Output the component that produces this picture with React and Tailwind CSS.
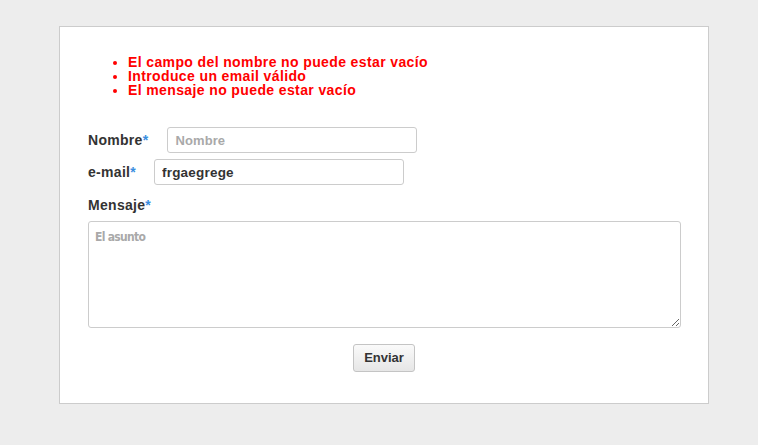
export default function App() {
  const ff = { fontFamily: '"Liberation Sans", Arial, sans-serif' };
  return (
    <div className="w-[758px] h-[445px] bg-[#ededed] pt-[26px] pl-[59px]" style={ff}>
      <div className="w-[650px] h-[378px] bg-white border border-[#cccccc] pt-[28px] pl-[28px] pr-[28px]">
        <ul className="list-disc pl-[40px] text-[14px] leading-[14px] font-bold tracking-[0.38px] text-[#ff0000] marker:text-[#ff0000]">
          <li>El campo del nombre no puede estar vacío</li>
          <li>Introduce un email válido</li>
          <li>El mensaje no puede estar vacío</li>
        </ul>
        <div className="mt-[30px] flex items-center h-[26px]">
          <label className="text-[14px] font-bold tracking-[0.3px] text-[#333333] mr-[19px]">
            Nombre<span className="text-[#3a8ee0]">*</span>
          </label>
          <input
            placeholder="Nombre"
            className="w-[250px] h-[26px] border border-[#cccccc] rounded-[3px] px-[7px] text-[13px] font-bold tracking-[0.1px] text-[#333333] placeholder:text-[#a9a9a9] outline-none"
          />
        </div>
        <div className="mt-[6px] flex items-center h-[26px]">
          <label className="text-[14px] font-bold tracking-[0.3px] text-[#333333] mr-[18px]">
            e-mail<span className="text-[#3a8ee0]">*</span>
          </label>
          <input
            defaultValue="frgaegrege"
            className="w-[250px] h-[26px] border border-[#cccccc] rounded-[3px] px-[7px] text-[13.5px] font-bold tracking-[0.2px] text-[#333333] outline-none"
          />
        </div>
        <div className="mt-[12px] text-[14px] font-bold tracking-[0.3px] text-[#333333] leading-[16px]">
          Mensaje<span className="text-[#3a8ee0]">*</span>
        </div>
        <textarea
          placeholder="El asunto"
          className="mt-[8px] block w-[593px] h-[107px] border border-[#cccccc] rounded-[3px] px-[6px] py-[8px] text-[12px] leading-[15px] font-bold tracking-[-0.7px] font-['Liberation_Sans_Narrow','DejaVu_Sans_Condensed',sans-serif] text-[#333333] placeholder:text-[#a9a9a9] outline-none resize"
        />
        <div className="flex justify-center mt-[16px]">
          <button className="w-[62px] h-[28px] border border-[#c4c4c4] rounded-[3px] bg-gradient-to-b from-[#fafafa] to-[#e6e6e6] text-[13px] font-bold text-[#333333]">
            Enviar
          </button>
        </div>
      </div>
    </div>
  );
}
